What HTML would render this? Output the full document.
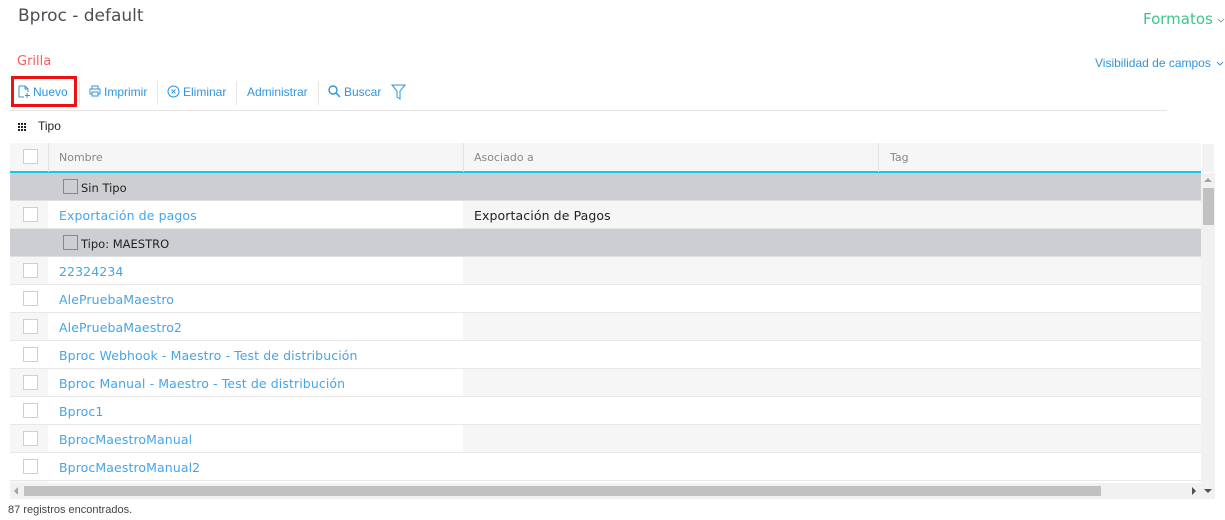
<!DOCTYPE html>
<html><head><meta charset="utf-8"><style>
*{margin:0;padding:0;box-sizing:border-box}
body{width:1225px;height:520px;overflow:hidden;background:#fff;font-family:"DejaVu Sans","Liberation Sans",sans-serif;position:relative}
.a{position:absolute;white-space:nowrap}
.tb{font-family:"Liberation Sans",sans-serif;font-size:12px;color:#2f95dd;top:85px}
.sep{position:absolute;top:81px;width:1px;height:24px;background:#e6e6e6}
.row{position:absolute;left:10px;width:1191px;height:28px;border-bottom:1px solid #e8e8e8;background:#fff}
.row .c0{position:absolute;left:0;top:0;width:38px;height:27px}
.row .c2{position:absolute;left:453px;top:0;width:738px;height:27px}
.g .c0,.g .c2{background:#f6f6f6}
.cb{position:absolute;left:13px;top:6px;width:15px;height:15px;border:1px solid #cfcfcf;background:#fff}
.row .t{position:absolute;left:49px;top:7px;font-size:12.5px;color:#45a5e8;letter-spacing:0.1px}
.grp{position:absolute;left:10px;width:1191px;height:28px;background:#cdced2;border-bottom:1px solid #e0e0e0}
.grp .cb{left:53px;top:6px;background:#cdced2;border-color:#888}
.grp .t{position:absolute;left:71px;top:8px;font-size:11.5px;color:#222}
</style></head><body>
<div class="a" style="left:18px;top:6px;font-size:17px;color:#4a4f55">Bproc - default</div>
<div class="a" style="left:1143px;top:10px;font-size:15px;color:#3dc58c">Formatos</div>
<svg class="a" style="left:1217px;top:18px" width="8" height="6"><path d="M1 1l3 3 3-3" stroke="#7aa7c8" fill="none"/></svg>
<div class="a" style="left:17px;top:54px;font-size:13px;color:#ff5a5a">Grilla</div>
<div class="a" style="left:1095px;top:56px;font-family:'Liberation Sans',sans-serif;font-size:12px;color:#2f95dd">Visibilidad de campos</div>
<svg class="a" style="left:1216px;top:61px" width="8" height="6"><path d="M1 1l3 3 3-3" stroke="#2f95dd" fill="none"/></svg>

<div class="a" style="left:11px;top:76px;width:66px;height:31px;border:3px solid #ee1111"></div>
<svg class="a" style="left:18px;top:85px" width="12" height="13"><path d="M1 1h6l3 3v3M1 1v11h5M7 1v3h3M9 8v5M7 10.5h5" stroke="#2f95dd" fill="none"/></svg>
<div class="a tb" style="left:33px">Nuevo</div>
<div class="sep" style="left:79px"></div>
<svg class="a" style="left:89px;top:85px" width="12" height="12"><rect x="3" y="1" width="6" height="3" stroke="#2f95dd" fill="none"/><rect x="1" y="4" width="10" height="5" stroke="#2f95dd" fill="none"/><rect x="3" y="7" width="6" height="4" stroke="#2f95dd" fill="#fff"/></svg>
<div class="a tb" style="left:104px">Imprimir</div>
<div class="sep" style="left:157px"></div>
<svg class="a" style="left:167px;top:85px" width="13" height="13"><circle cx="6.5" cy="6.5" r="5.5" stroke="#2f95dd" fill="none"/><path d="M4.5 4.5l4 4M8.5 4.5l-4 4" stroke="#2f95dd"/></svg>
<div class="a tb" style="left:183px">Eliminar</div>
<div class="sep" style="left:236px"></div>
<div class="a tb" style="left:247px">Administrar</div>
<div class="sep" style="left:318px"></div>
<svg class="a" style="left:328px;top:85px" width="13" height="13"><circle cx="5" cy="5" r="4" stroke="#2f95dd" fill="none" stroke-width="1.4"/><path d="M8 8l4 4" stroke="#2f95dd" stroke-width="1.5"/></svg>
<div class="a tb" style="left:344px">Buscar</div>
<svg class="a" style="left:391px;top:84px" width="15" height="16"><path d="M1 1h13l-5 6v8l-3-2V7z" stroke="#2f95dd" fill="none"/></svg>
<div class="a" style="left:10px;top:110px;width:1157px;height:1px;background:#e3e3e3"></div>

<svg class="a" style="left:18px;top:123px" width="8" height="8"><g fill="#222"><rect x="0" y="0" width="2" height="2"/><rect x="3" y="0" width="2" height="2"/><rect x="6" y="0" width="2" height="2"/><rect x="0" y="3" width="2" height="2"/><rect x="3" y="3" width="2" height="2"/><rect x="6" y="3" width="2" height="2"/><rect x="0" y="6" width="2" height="2"/><rect x="3" y="6" width="2" height="2"/><rect x="6" y="6" width="2" height="2"/></g></svg>
<div class="a" style="left:38px;top:119px;font-family:'Liberation Sans',sans-serif;font-size:12px;color:#222">Tipo</div>

<div class="a" style="left:10px;top:143px;width:1191px;height:30px;background:#f6f6f6;border-bottom:2px solid #12c8ec"></div>
<div class="a" style="left:1201px;top:143px;width:14px;height:30px;background:#f2f2f2;border:1px solid #fff"></div>
<div class="a" style="left:48px;top:143px;width:1px;height:29px;background:#e2e2e2"></div>
<div class="a" style="left:463px;top:143px;width:1px;height:29px;background:#e2e2e2"></div>
<div class="a" style="left:878px;top:143px;width:1px;height:29px;background:#e2e2e2"></div>
<div class="a" style="left:23px;top:149px;width:15px;height:15px;border:1px solid #cfcfcf;background:#fff"></div>
<div class="a" style="left:59px;top:151px;font-size:11px;color:#888">Nombre</div>
<div class="a" style="left:474px;top:151px;font-size:11px;color:#888">Asociado a</div>
<div class="a" style="left:890px;top:151px;font-size:11px;color:#888">Tag</div>

<div class="grp" style="top:173px"><div class="cb"></div><div class="t">Sin Tipo</div></div>
<div class="row g" style="top:201px"><div class="c0"></div><div class="c2"></div><div class="cb"></div><div class="t">Exportación de pagos</div><div class="t" style="left:464px;color:#222">Exportación de Pagos</div></div>
<div class="grp" style="top:229px"><div class="cb"></div><div class="t">Tipo: MAESTRO</div></div>
<div class="row g" style="top:257px"><div class="c0"></div><div class="c2"></div><div class="cb"></div><div class="t">22324234</div></div>
<div class="row" style="top:285px"><div class="cb"></div><div class="t">AlePruebaMaestro</div></div>
<div class="row g" style="top:313px"><div class="c0"></div><div class="c2"></div><div class="cb"></div><div class="t">AlePruebaMaestro2</div></div>
<div class="row" style="top:341px"><div class="cb"></div><div class="t">Bproc Webhook - Maestro - Test de distribución</div></div>
<div class="row g" style="top:369px"><div class="c0"></div><div class="c2"></div><div class="cb"></div><div class="t">Bproc Manual - Maestro - Test de distribución</div></div>
<div class="row" style="top:397px"><div class="cb"></div><div class="t">Bproc1</div></div>
<div class="row g" style="top:425px"><div class="c0"></div><div class="c2"></div><div class="cb"></div><div class="t">BprocMaestroManual</div></div>
<div class="row" style="top:453px"><div class="cb"></div><div class="t">BprocMaestroManual2</div></div>
<div class="a" style="left:10px;top:481px;width:38px;height:2px;background:#f6f6f6"></div>

<div class="a" style="left:1201px;top:173px;width:14px;height:310px;background:#f1f1f1"></div>
<svg class="a" style="left:1204px;top:177px" width="8" height="6"><path d="M0 5h8L4 1z" fill="#a3a3a3"/></svg>
<div class="a" style="left:1203px;top:188px;width:11px;height:37px;background:#c1c1c1"></div>
<div class="a" style="left:10px;top:483px;width:1205px;height:16px;background:#f1f1f1"></div>
<svg class="a" style="left:13px;top:487px" width="6" height="8"><path d="M5 0v8L1 4z" fill="#a3a3a3"/></svg>
<div class="a" style="left:24px;top:486px;width:1077px;height:10px;background:#c1c1c1"></div>
<svg class="a" style="left:1191px;top:487px" width="6" height="8"><path d="M1 0v8l4-4z" fill="#505050"/></svg>
<svg class="a" style="left:1204px;top:488px" width="8" height="6"><path d="M0 1h8L4 5z" fill="#505050"/></svg>
<div class="a" style="left:8px;top:504px;font-family:'Liberation Sans',sans-serif;font-size:11px;color:#444">87 registros encontrados.</div>
</body></html>
